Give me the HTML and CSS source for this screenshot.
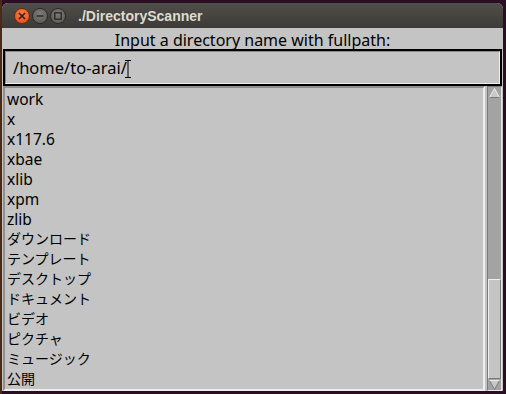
FILE: index.html
```html
<!DOCTYPE html>
<html lang="ja">
<head>
    <meta charset="UTF-8">
    <title>./DirectoryScanner</title>
    <link rel="stylesheet" href="styles.css">
</head>
<body>
    <div class="window">
        <div class="titlebar">
            <div class="controls">
                <span class="btn close">
                    <svg width="8" height="8" viewBox="0 0 8 8"><path d="M1 1L7 7M7 1L1 7" stroke="#3a1a0c" stroke-width="1.6"/></svg>
                </span>
                <span class="btn min">
                    <svg width="8" height="8" viewBox="0 0 8 8"><path d="M0.5 4H7.5" stroke="#2e2d2a" stroke-width="1.6"/></svg>
                </span>
                <span class="btn max">
                    <svg width="8" height="8" viewBox="0 0 8 8"><rect x="0.8" y="0.8" width="6.4" height="6.4" fill="none" stroke="#2e2d2a" stroke-width="1.4"/></svg>
                </span>
            </div>
            <div class="title">./DirectoryScanner</div>
        </div>
        <div class="content">
            <div class="label">Input a directory name with fullpath:</div>
            <div class="entry">
                <div class="entry-inner">
                    <span class="entry-text">/home/to-arai/</span>
                    <svg class="ibeam" width="7" height="18" viewBox="0 0 7 18"><path d="M0 0.5H6M3 0.5V17.5M0 17.5H6" stroke="#000" stroke-width="1"/></svg>
                </div>
            </div>
            <div class="listarea">
                <ul class="listbox">
                    <li>work</li>
                    <li>x</li>
                    <li>x117.6</li>
                    <li>xbae</li>
                    <li>xlib</li>
                    <li>xpm</li>
                    <li>zlib</li>
                    <li class="ja">ダウンロード</li>
                    <li class="ja">テンプレート</li>
                    <li class="ja">デスクトップ</li>
                    <li class="ja">ドキュメント</li>
                    <li class="ja">ビデオ</li>
                    <li class="ja">ピクチャ</li>
                    <li class="ja">ミュージック</li>
                    <li class="ja">公開</li>
                </ul>
                <div class="scrollbar">
                    <div class="arrow">
                        <svg width="11" height="10" viewBox="0 0 11 10"><path d="M5.5 0.5L10.5 9.5H0.5Z" fill="#c9c9c9" stroke="#ededed" stroke-width="1"/><path d="M10.5 9.5H0.5" stroke="#7a7a7a"/></svg>
                    </div>
                    <div class="trough">
                        <div class="thumb"></div>
                    </div>
                    <div class="arrow">
                        <svg width="11" height="10" viewBox="0 0 11 10"><path d="M0.5 0.5H10.5L5.5 9.5Z" fill="#c9c9c9" stroke="#7a7a7a" stroke-width="1"/><path d="M0.5 0.5H10.5" stroke="#ededed"/></svg>
                    </div>
                </div>
            </div>
        </div>
    </div>
</body>
</html>
```

FILE: styles.css
```css
body {
    margin: 0;
    width: 506px;
    height: 394px;
    overflow: hidden;
    background-color: #2b0d24;
    padding: 3px 0 0 2px;
    box-sizing: border-box;
    border-left: 2px solid #4a2a14;
}
.window {
    width: 501px;
    height: 388px;
    margin-left: -2px;
    background-color: #c4c4c4;
    border-radius: 6px 6px 0 0;
    overflow: hidden;
}
.titlebar {
    height: 25px;
    display: flex;
    align-items: center;
    background: linear-gradient(#504e49, #3c3b37);
    color: #dfdbd2;
}
.controls {
    display: flex;
    gap: 2px;
    padding-left: 12px;
    width: 64px;
}
.btn {
    width: 16px;
    height: 16px;
    border-radius: 50%;
    display: flex;
    align-items: center;
    justify-content: center;
    box-sizing: border-box;
}
.btn.close {
    background: radial-gradient(circle at 50% 35%, #f7824f, #de4614);
    border: 1px solid #7a2a0c;
}
.btn.min, .btn.max {
    background: radial-gradient(circle at 50% 35%, #7c7a75, #5a5955);
    border: 1px solid #2c2b28;
}
.title {
    font-family: "Liberation Sans", Arial, sans-serif;
    font-weight: bold;
    font-size: 14px;
}
.content {
    height: 363px;
    padding: 0 1px;
    display: flex;
    flex-direction: column;
}
.label {
    height: 21px;
    line-height: 24px;
    text-align: center;
    font-family: "Noto Sans", sans-serif;
    font-size: 16px;
    color: #000;
}
.entry {
    height: 37px;
    border: 2px solid #000;
    box-sizing: border-box;
}
.entry-inner {
    height: 100%;
    box-sizing: border-box;
    border-top: 1px solid #8a8a8a;
    border-left: 1px solid #8a8a8a;
    border-bottom: 1px solid #efefef;
    border-right: 1px solid #efefef;
    display: flex;
    align-items: center;
    padding-left: 7px;
}
.entry-text {
    font-family: "Noto Sans", sans-serif;
    font-size: 16.5px;
    color: #000;
}
.ibeam {
    margin-left: -2px;
    margin-top: 2px;
}
.listarea {
    flex: 1;
    display: flex;
    gap: 2px;
}
.listbox {
    flex: 1;
    margin: 0;
    padding: 1px 0 0 2px;
    list-style: none;
    border: 2px solid;
    border-color: #8f8f8f #eeeeee #eeeeee #8f8f8f;
    font-family: "Noto Sans", "Noto Sans CJK JP", sans-serif;
    font-size: 15.5px;
    color: #000;
}
.listbox li {
    height: 20px;
    line-height: 20px;
}
.listbox li.ja {
    font-size: 14px;
}
.scrollbar {
    width: 15px;
    display: flex;
    flex-direction: column;
    background-color: #a3a3a3;
    border: 1px solid;
    border-color: #7a7a7a #e8e8e8 #e8e8e8 #7a7a7a;
    box-sizing: border-box;
}
.arrow {
    height: 11px;
    display: flex;
    align-items: center;
    justify-content: center;
    background-color: #a3a3a3;
}
.trough {
    flex: 1;
    display: flex;
    flex-direction: column;
    justify-content: flex-end;
}
.thumb {
    height: 100px;
    background-color: #c4c4c4;
    border: 1px solid;
    border-color: #eeeeee #7a7a7a #7a7a7a #eeeeee;
    box-sizing: border-box;
}
```
